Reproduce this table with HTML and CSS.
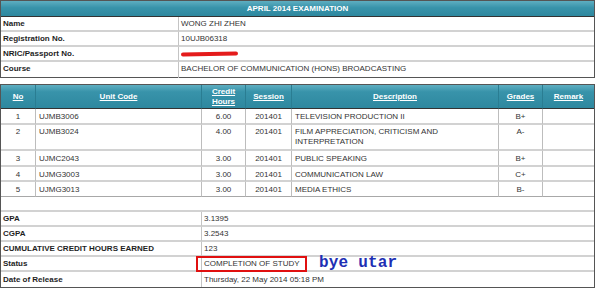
FILE: index.html
```html
<!DOCTYPE html>
<html>
<head>
<meta charset="utf-8">
<link rel="stylesheet" href="styles.css">
</head>
<body>
<div class="sheet">
  <div class="panel info">
    <div class="panel-head">APRIL 2014 EXAMINATION</div>
    <div class="kv">
      <div class="k">Name</div><div class="v">WONG ZHI ZHEN</div>
      <div class="k">Registration No.</div><div class="v">10UJB06318</div>
      <div class="k">NRIC/Passport No.</div><div class="v"><span class="redact"></span></div>
      <div class="k">Course</div><div class="v">BACHELOR OF COMMUNICATION (HONS) BROADCASTING</div>
    </div>
  </div>

  <div class="panel results">
    <div class="courses">
      <div class="th"><a>No</a></div>
      <div class="th"><a>Unit Code</a></div>
      <div class="th"><a>Credit<br>Hours</a></div>
      <div class="th"><a>Session</a></div>
      <div class="th"><a>Description</a></div>
      <div class="th"><a>Grades</a></div>
      <div class="th last"><a>Remark</a></div>

      <div class="td c r1">1</div><div class="td r1">UJMB3006</div><div class="td c r1">6.00</div><div class="td c r1">201401</div><div class="td r1">TELEVISION PRODUCTION II</div><div class="td c r1">B+</div><div class="td last r1"></div>
      <div class="td c r2">2</div><div class="td r2">UJMB3024</div><div class="td c r2">4.00</div><div class="td c r2">201401</div><div class="td r2">FILM APPRECIATION, CRITICISM AND INTERPRETATION</div><div class="td c r2">A-</div><div class="td last r2"></div>
      <div class="td c r3">3</div><div class="td r3">UJMC2043</div><div class="td c r3">3.00</div><div class="td c r3">201401</div><div class="td r3">PUBLIC SPEAKING</div><div class="td c r3">B+</div><div class="td last r3"></div>
      <div class="td c r4">4</div><div class="td r4">UJMG3003</div><div class="td c r4">3.00</div><div class="td c r4">201401</div><div class="td r4">COMMUNICATION LAW</div><div class="td c r4">C+</div><div class="td last r4"></div>
      <div class="td c r5">5</div><div class="td r5">UJMG3013</div><div class="td c r5">3.00</div><div class="td c r5">201401</div><div class="td r5">MEDIA ETHICS</div><div class="td c r5">B-</div><div class="td last r5"></div>
    </div>
    <div class="spacer"></div>
    <div class="summary">
      <div class="k">GPA</div><div class="v">3.1395</div>
      <div class="k">CGPA</div><div class="v">3.2543</div>
      <div class="k">CUMULATIVE CREDIT HOURS EARNED</div><div class="v">123</div>
      <div class="k">Status</div><div class="v status"><span class="boxed">COMPLETION OF STUDY</span><span class="bye">bye utar</span></div>
      <div class="k lastrow">Date of Release</div><div class="v lastrow">Thursday, 22 May 2014 05:18 PM</div>
    </div>
  </div>
</div>
</body>
</html>
```
FILE: styles.css
```css
html, body {
  margin: 0;
  padding: 0;
  background: #fff;
}
body {
  font-family: "Liberation Sans", Arial, sans-serif;
  font-size: 8px;
  color: #2a2a2a;
}
.sheet {
  width: 595px;
}
.panel {
  border: 1px solid #555;
  box-sizing: border-box;
  width: 595px;
}
.panel-head {
  height: 16px;
  box-sizing: border-box;
  border-bottom: 1px solid #333;
  background: linear-gradient(#5eaec1, #3893aa 45%, #2e889f);
  color: #fff;
  font-weight: bold;
  text-align: center;
  line-height: 15px;
}
.kv {
  display: grid;
  grid-template-columns: 178px 1fr;
  grid-auto-rows: 15px;
}
.kv .k, .kv .v {
  box-sizing: border-box;
  border-bottom: 2px solid #d2d2d2;
  line-height: 14px;
  white-space: nowrap;
}
.kv .k {
  font-weight: bold;
  color: #1e1e1e;
  padding-left: 2px;
  border-right: 1px solid #c4c4c4;
}
.kv .v {
  padding-left: 2px;
  color: #333;
}
.kv .k:nth-last-child(2), .kv .v:last-child {
  border-bottom: none;
  height: 16px;
}
.redact {
  display: inline-block;
  width: 57px;
  height: 4px;
  margin-top: 5px;
  vertical-align: top;
  background: #e41b1b;
  border-radius: 2px;
  transform: rotate(-1deg);
}
.results {
  margin-top: 6px;
}
.courses {
  display: grid;
  grid-template-columns: 35px 166px 44px 46px 207px 44px 1fr;
  grid-template-rows: 24px 16px 26px 16px 15px 15px;
}
.th {
  box-sizing: border-box;
  background: linear-gradient(#5eaec1, #3893aa 30%, #2e889f);
  border-right: 1px solid #2a7d92;
  border-bottom: 1px solid #333;
  display: flex;
  align-items: center;
  justify-content: center;
  text-align: center;
  line-height: 10px;
}
.th a {
  color: #fff;
  font-weight: bold;
  text-decoration: underline;
}
.th.last, .td.last {
  border-right: none;
}
.td {
  box-sizing: border-box;
  border-right: 1px solid #bdbdbd;
  border-bottom: 2px solid #d2d2d2;
  padding: 2px 2px 0 3px;
  line-height: 10px;
  color: #333;
}
.td.c {
  text-align: center;
  padding-left: 0;
  padding-right: 0;
}
.td.r1, .td.r3, .td.r4, .td.r5 {
  padding-top: 3px;
}
.td.r5 {
  border-bottom: 1px solid #a8a8a8;
}
.spacer {
  height: 13px;
  border-bottom: 2px solid #d2d2d2;
}
.summary {
  display: grid;
  grid-template-columns: 201px 1fr;
  grid-auto-rows: 15px;
}
.summary .k, .summary .v {
  box-sizing: border-box;
  border-bottom: 2px solid #d2d2d2;
  line-height: 14px;
  white-space: nowrap;
}
.summary .k {
  font-weight: bold;
  color: #1e1e1e;
  padding-left: 2px;
  border-right: 1px solid #c4c4c4;
}
.summary .v {
  padding-left: 2px;
  color: #333;
}
.summary .lastrow {
  border-bottom: none;
  line-height: 16px;
}
.status {
  position: relative;
  overflow: visible;
}
.boxed {
  display: inline-block;
  box-sizing: border-box;
  height: 16px;
  margin-left: -8px;
  margin-top: -1px;
  padding: 0 5px 0 6px;
  border: 2px solid #e01010;
  line-height: 12px;
  vertical-align: top;
}
.bye {
  position: absolute;
  left: 117px;
  top: -3px;
  font-family: "Liberation Mono", "DejaVu Sans Mono", monospace;
  font-weight: bold;
  font-size: 16px;
  line-height: 18px;
  color: #1e2fb4;
  letter-spacing: 0.2px;
}
```
